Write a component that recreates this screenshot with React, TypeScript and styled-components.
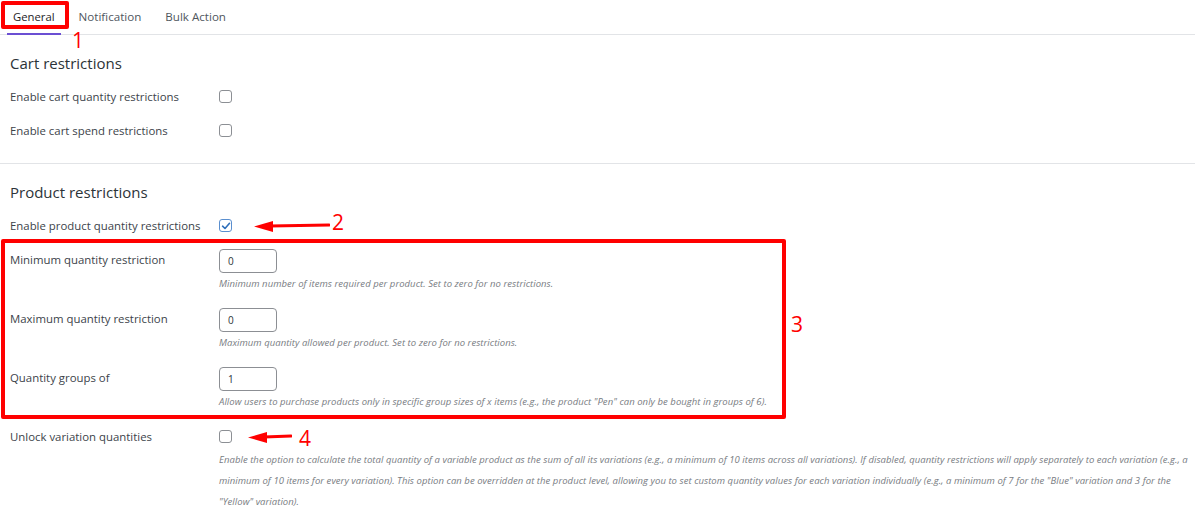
import React from 'react';
import styled, { createGlobalStyle } from 'styled-components';

const GlobalStyle = createGlobalStyle`
  body {
    margin: 0;
    background: #fff;
    font-family: "Open Sans", "Liberation Sans", sans-serif;
  }
`;

const Page = styled.div`
  position: relative;
  width: 1195px;
  height: 522px;
  overflow: hidden;
  background: #fff;
`;

const Tabs = styled.div`
  display: flex;
  gap: 12px;
  height: 34px;
  padding-left: 7px;
  border-bottom: 1px solid #e2e4e7;
`;

const Tab = styled.div<{ $active?: boolean }>`
  display: flex;
  align-items: center;
  padding: 0 6px 1px;
  font-size: ${(p) => (p.$active ? '11.3px' : '11.6px')};
  font-weight: 500;
  color: ${(p) => (p.$active ? '#1d2327' : '#50575e')};
  border-bottom: 2px solid ${(p) => (p.$active ? '#6b4fd3' : 'transparent')};
  margin-bottom: -1px;
`;

const Section = styled.section<{ $divider?: boolean }>`
  padding: 18px 0 0 10px;
  border-bottom: ${(p) => (p.$divider ? '1px solid #e2e4e7' : 'none')};
  padding-bottom: ${(p) => (p.$divider ? '15px' : '0')};
`;

const Heading = styled.h2`
  margin: 0 0 7px;
  font-size: 15px;
  line-height: 20px;
  font-weight: 500;
  color: #2c3338;
`;

const Row = styled.div<{ $pad: string }>`
  display: grid;
  grid-template-columns: 209px 1fr;
  padding: ${(p) => p.$pad};
`;

const Label = styled.div<{ $lh: number }>`
  font-size: 11.4px;
  line-height: ${(p) => p.$lh}px;
  color: #3c434a;
  white-space: nowrap;
`;

const Field = styled.div<{ $gap?: number }>`
  display: flex;
  flex-direction: column;
  align-items: flex-start;
  gap: ${(p) => p.$gap ?? 4}px;
`;

const Box = styled.span<{ $checked?: boolean }>`
  display: flex;
  align-items: center;
  justify-content: center;
  width: 13px;
  height: 13px;
  box-sizing: border-box;
  border: ${(p) => (p.$checked ? '1.5px solid #5b8fcf' : '1px solid #8c8f94')};
  border-radius: 3px;
  background: #fff;
`;

const NumberInput = styled.div`
  box-sizing: border-box;
  width: 58px;
  height: 24px;
  border: 1px solid #8c8f94;
  border-radius: 4px;
  padding-left: 8px;
  font-size: 10px;
  line-height: 22px;
  color: #2c3338;
`;

const Desc = styled.p<{ $lh: number }>`
  margin: 0;
  font-size: 9.5px;
  letter-spacing: 0.05px;
  line-height: ${(p) => p.$lh}px;
  font-style: italic;
  color: #787c82;
  max-width: 974px;
`;

const Frame = styled.div<{ $l: number; $t: number; $w: number; $h: number }>`
  position: absolute;
  left: ${(p) => p.$l}px;
  top: ${(p) => p.$t}px;
  width: ${(p) => p.$w}px;
  height: ${(p) => p.$h}px;
  box-sizing: border-box;
  border: 4px solid #f00;
  border-radius: 2px;
  pointer-events: none;
`;

const Mark = styled.span<{ $l: number; $t: number }>`
  position: absolute;
  left: ${(p) => p.$l}px;
  top: ${(p) => p.$t}px;
  font-family: "Open Sans", "Liberation Sans", sans-serif;
  font-size: 21px;
  line-height: 21px;
  color: #f00;
`;

const ArrowSvg = styled.svg<{ $l: number; $t: number }>`
  position: absolute;
  left: ${(p) => p.$l}px;
  top: ${(p) => p.$t}px;
`;

const Checkbox = ({ checked }: { checked?: boolean }) => (
  <Box $checked={checked}>
    {checked && (
      <svg width="10" height="10" viewBox="0 0 10 10">
        <path d="M1.6 5.2 L4 7.5 L8.5 2.3" fill="none" stroke="#2f6fba" strokeWidth="1.6" strokeLinecap="round" strokeLinejoin="round" />
      </svg>
    )}
  </Box>
);

const Arrow = ({ l, t, w }: { l: number; t: number; w: number }) => (
  <ArrowSvg $l={l} $t={t} width={w} height="14" viewBox={`0 0 ${w} 14`}>
    <path d={`M16 7 L${w - 1} 6`} stroke="#f00" strokeWidth="3" strokeLinecap="round" />
    <path d="M0 7.5 L19 2 L19 13 Z" fill="#f00" />
  </ArrowSvg>
);

const CheckRow = ({ label, checked }: { label: string; checked?: boolean }) => (
  <Row $pad="10px 0 11px">
    <Label $lh={13}>{label}</Label>
    <Field>
      <Checkbox checked={checked} />
    </Field>
  </Row>
);

const NumberRow = ({ label, value, desc }: { label: string; value: string; desc: string }) => (
  <Row $pad="6px 0 11px">
    <Label $lh={22}>{label}</Label>
    <Field>
      <NumberInput>{value}</NumberInput>
      <Desc $lh={14}>{desc}</Desc>
    </Field>
  </Row>
);

export default function App() {
  return (
    <Page>
      <GlobalStyle />
      <Tabs>
        <Tab $active>General</Tab>
        <Tab>Notification</Tab>
        <Tab>Bulk Action</Tab>
      </Tabs>

      <Section $divider>
        <Heading>Cart restrictions</Heading>
        <CheckRow label="Enable cart quantity restrictions" />
        <CheckRow label="Enable cart spend restrictions" />
      </Section>

      <Section>
        <Heading>Product restrictions</Heading>
        <CheckRow label="Enable product quantity restrictions" checked />
        <NumberRow
          label="Minimum quantity restriction"
          value="0"
          desc="Minimum number of items required per product. Set to zero for no restrictions."
        />
        <NumberRow
          label="Maximum quantity restriction"
          value="0"
          desc="Maximum quantity allowed per product. Set to zero for no restrictions."
        />
        <NumberRow
          label="Quantity groups of"
          value="1"
          desc={'Allow users to purchase products only in specific group sizes of x items (e.g., the product "Pen" can only be bought in groups of 6).'}
        />
        <Row $pad="10px 0 0">
          <Label $lh={13}>Unlock variation quantities</Label>
          <Field $gap={6}>
            <Checkbox />
            <Desc $lh={21}>
              Enable the option to calculate the total quantity of a variable product as the sum of all its variations (e.g., a minimum of 10 items across all variations). If disabled, quantity restrictions will apply separately to each variation (e.g., a minimum of 10 items for every variation). This option can be overridden at the product level, allowing you to set custom quantity values for each variation individually (e.g., a minimum of 7 for the "Blue" variation and 3 for the "Yellow" variation).
            </Desc>
          </Field>
        </Row>
      </Section>

      <Frame $l={1} $t={1} $w={68} $h={28} />
      <Mark $l={72} $t={30}>1</Mark>
      <Arrow l={254} t={219} w={76} />
      <Mark $l={332} $t={212}>2</Mark>
      <Frame $l={1} $t={239} $w={785} $h={180} />
      <Mark $l={791} $t={314}>3</Mark>
      <Arrow l={248} t={430} w={44} />
      <Mark $l={299} $t={428}>4</Mark>
    </Page>
  );
}
